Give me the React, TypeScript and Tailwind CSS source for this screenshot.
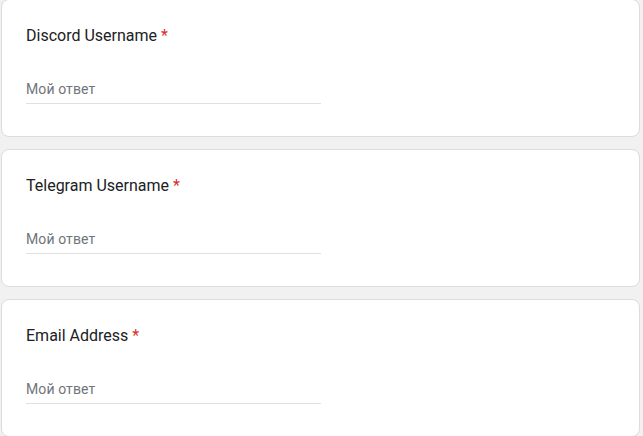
import React from "react";

const FIELDS = ["Discord Username", "Telegram Username", "Email Address"];

function Question({ label }: { label: string }) {
  return (
    <div className="h-[138px] w-[639px] shrink-0 rounded-lg border border-[#dadce0] bg-white px-6 pt-6">
      <div className="text-[16px] leading-6 text-[#202124]">
        {label}
        <span className="text-[#d93025]"> *</span>
      </div>
      <div className="mt-[31px] w-[295px] border-b border-[#e0e0e0] pb-1 text-[14px] leading-5 tracking-[0.1px] text-[#70757a]">
        Мой ответ
      </div>
    </div>
  );
}

export default function App() {
  return (
    <div
      className="h-[436px] w-[643px] overflow-hidden bg-[#f1f1f1]"
      style={{ fontFamily: "Roboto, 'Noto Sans', sans-serif" }}
    >
      <div className="-mt-[1px] ml-[1px] flex flex-col gap-3">
        {FIELDS.map((f) => (
          <Question key={f} label={f} />
        ))}
      </div>
    </div>
  );
}
